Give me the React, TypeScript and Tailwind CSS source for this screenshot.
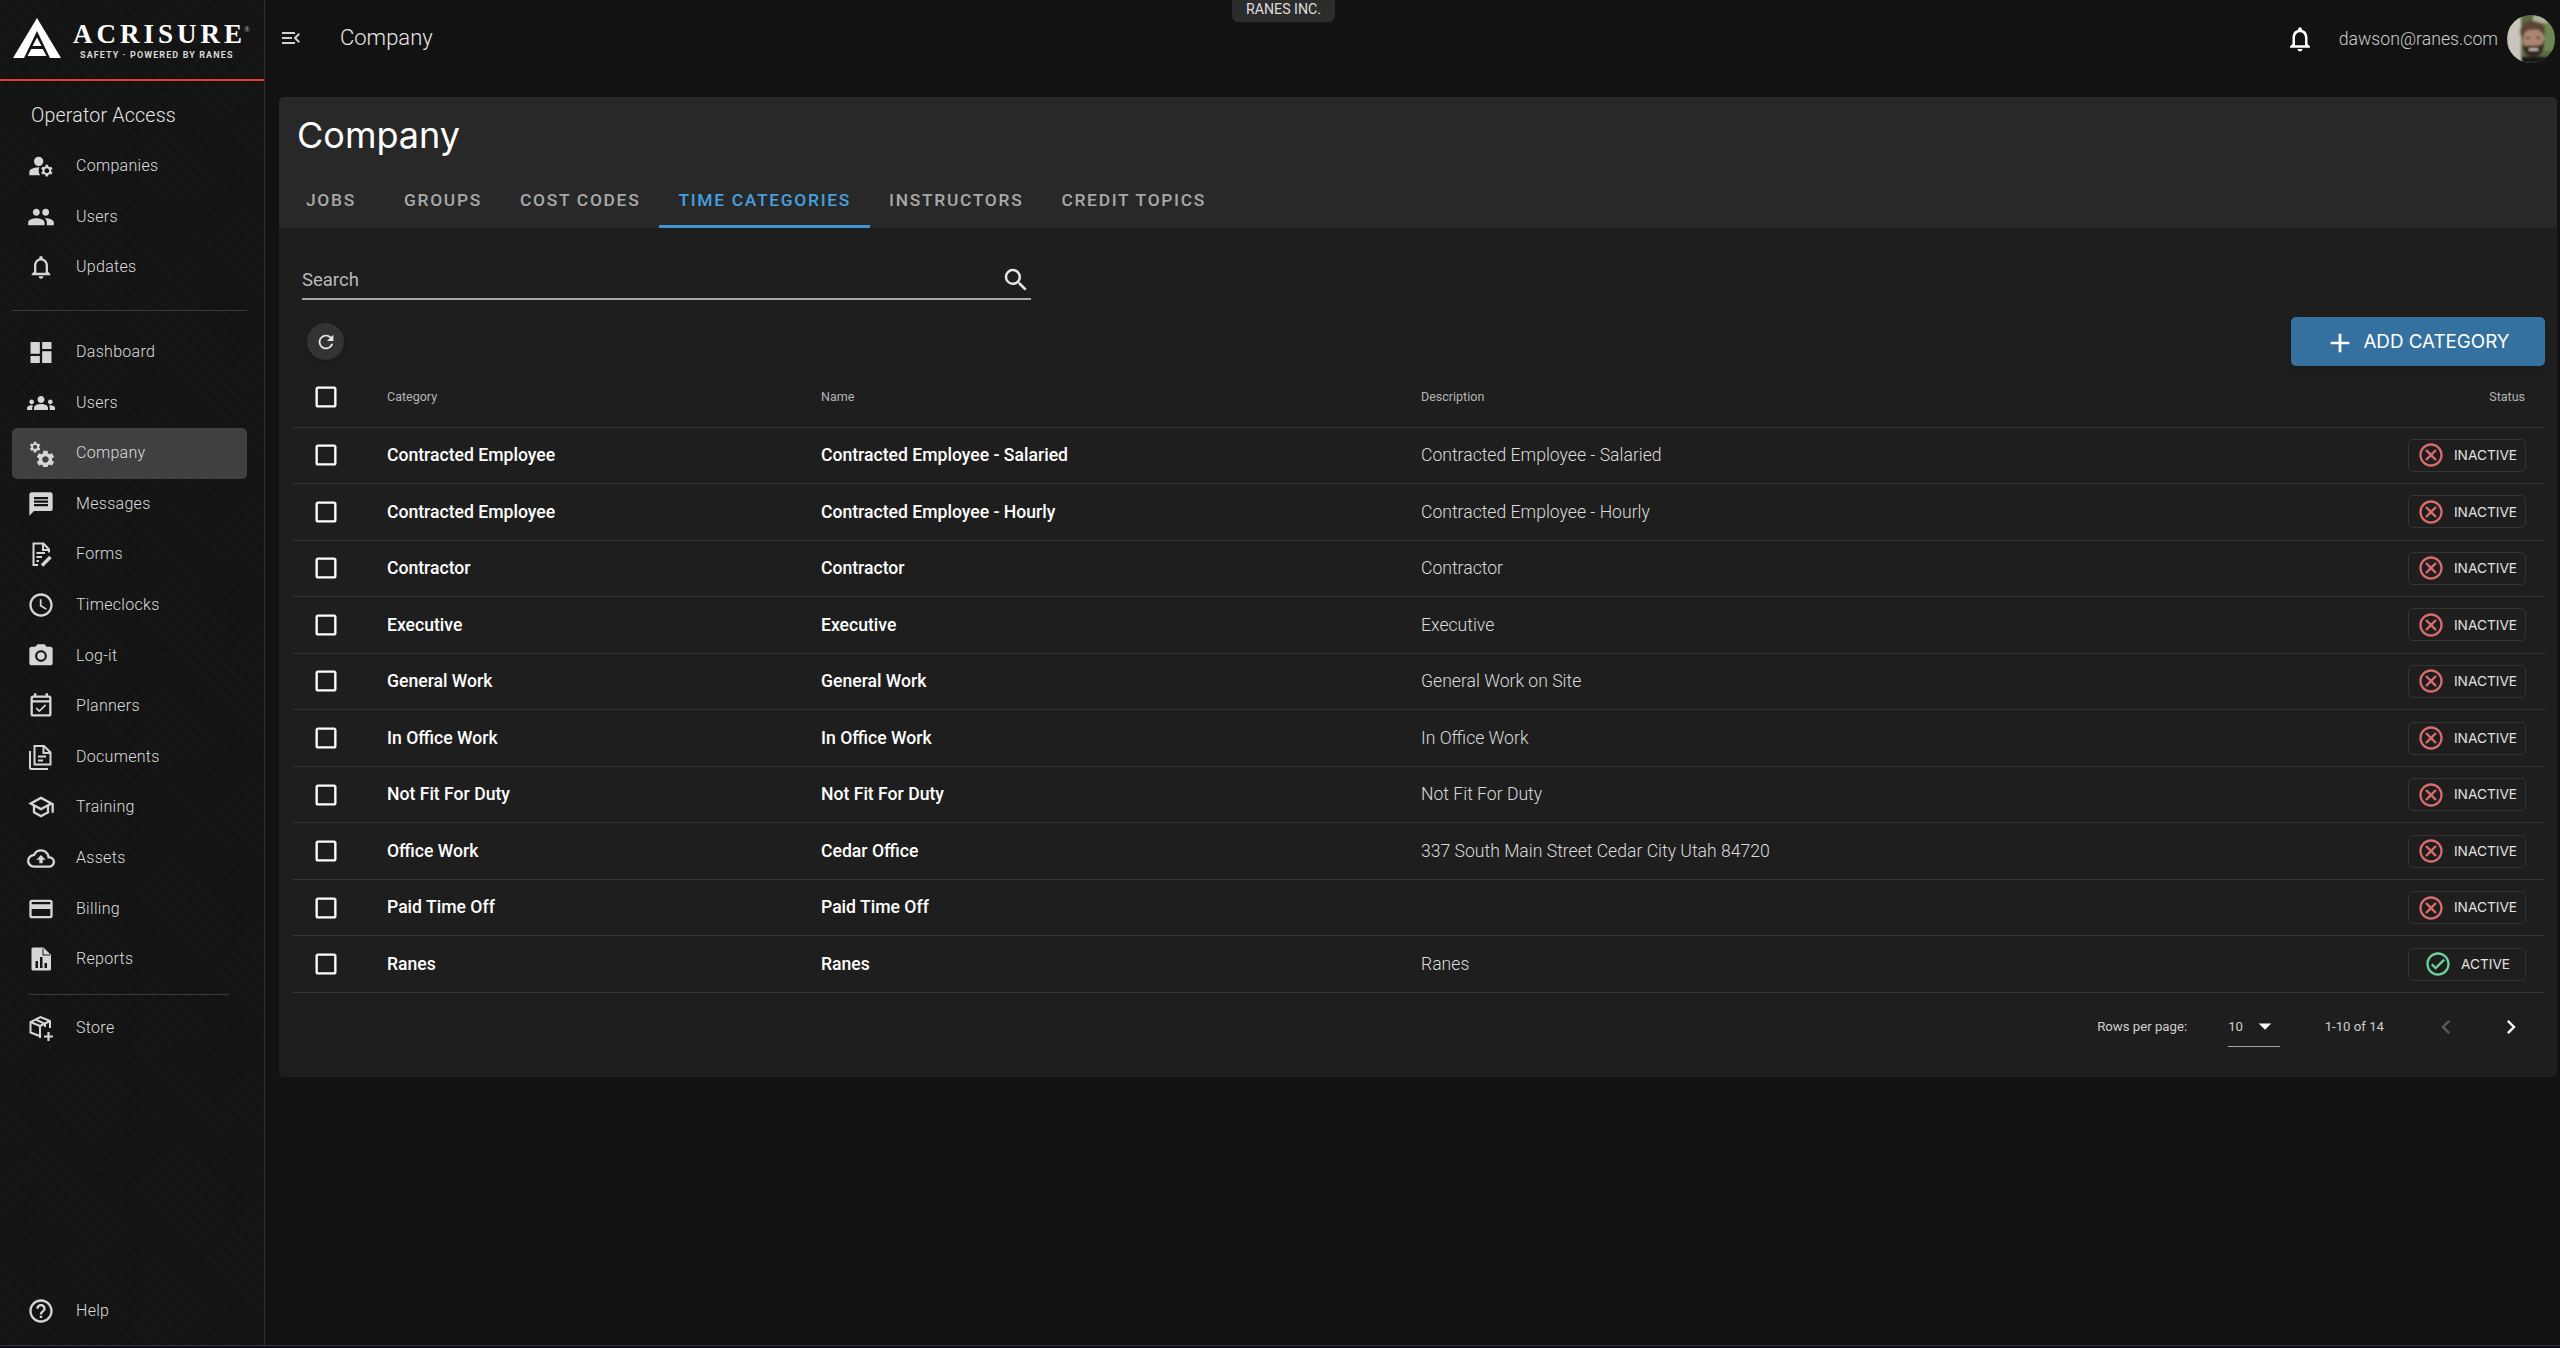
import React from "react";
import {
  MdManageAccounts, MdPeople, MdOutlineNotifications, MdDashboard, MdGroups, MdMessage, MdOutlineAccessTime,
  MdPhotoCamera, MdOutlineEventAvailable, MdOutlineSchool, MdOutlineCloudUpload, MdOutlineCreditCard,
  MdHelpOutline, MdMenuOpen, MdSearch, MdRefresh, MdAdd, MdOutlineCancel, MdOutlineCheckCircle,
  MdArrowDropDown, MdChevronLeft, MdChevronRight, MdCheckBoxOutlineBlank,
} from "react-icons/md";

const gear = "M19.14 12.94c.04-.3.06-.61.06-.94 0-.32-.02-.64-.07-.94l2.03-1.58c.18-.14.23-.41.12-.61l-1.92-3.32c-.12-.22-.37-.29-.59-.22l-2.39.96c-.5-.38-1.03-.7-1.62-.94l-.36-2.54c-.04-.24-.24-.41-.48-.41h-3.84c-.24 0-.43.17-.47.41l-.36 2.54c-.59.24-1.13.57-1.62.94l-2.39-.96c-.22-.08-.47 0-.59.22L2.74 8.87c-.12.21-.08.47.12.61l2.03 1.58c-.05.3-.09.63-.09.94s.02.64.07.94l-2.03 1.58c-.18.14-.23.41-.12.61l1.92 3.32c.12.22.37.29.59.22l2.39-.96c.5.38 1.03.7 1.62.94l.36 2.54c.05.24.24.41.48.41h3.84c.24 0 .44-.17.47-.41l.36-2.54c.59-.24 1.13-.56 1.62-.94l2.39.96c.22.08.47 0 .59-.22l1.92-3.32c.12-.22.07-.47-.12-.61l-2.01-1.58zM12 15.6c-1.98 0-3.6-1.62-3.6-3.6s1.62-3.6 3.6-3.6 3.6 1.62 3.6 3.6-1.62 3.6-3.6 3.6z";

type IconProps = { size?: number; className?: string };

const Gears = ({ size = 28 }: IconProps) => (
  <svg width={size} height={size} viewBox="0 0 28 28" fill="currentColor">
    <g transform="translate(1.5 1.5) scale(0.55)"><path d={gear} /></g>
    <g transform="translate(7.5 9.5) scale(0.91)"><path d={gear} /></g>
  </svg>
);
const FormsIcon = ({ size = 28 }: IconProps) => (
  <svg width={size} height={size} viewBox="0 0 28 28" fill="none" stroke="currentColor" strokeWidth="2">
    <path d="M11 25H6.5V3.5H16.5L22 9.5V12.5" />
    <path d="M16 4V10H22" />
    <path d="M9.5 13H18M9.5 17H15M9.5 21H12" />
    <path d="M15 25.5L23.5 17" strokeWidth="3.4" />
  </svg>
);
const DocsIcon = ({ size = 28 }: IconProps) => (
  <svg width={size} height={size} viewBox="0 0 28 28" fill="none" stroke="currentColor" strokeWidth="2">
    <path d="M3 8V24.5a1.5 1.5 0 0 0 1.5 1.5H21" />
    <path d="M7.5 3H17L23.5 9.5V21.5H7.5Z" />
    <path d="M16.5 3V10H23.5" />
    <path d="M11 13.5H19M11 17.5H16" />
  </svg>
);
const ReportsIcon = ({ size = 28 }: IconProps) => (
  <svg width={size} height={size} viewBox="0 0 28 28">
    <path fill="currentColor" d="M6 2.5H16.5L24 10V24a1.5 1.5 0 0 1-1.5 1.5H6A1.5 1.5 0 0 1 4.500 24V4A1.5 1.500 0 0 1 6 2.500Z" />
    <path fill="#141414" d="M8.500 16H11V23H8.500ZM13 12H15.500V23H13ZM17.500 18H20V23H17.500ZM15.500 3.500V10.500H23V9.500H16.500V3.500Z" />
  </svg>
);
const StoreIcon = ({ size = 28 }: IconProps) => (
  <svg width={size} height={size} viewBox="0 0 28 28" fill="none" stroke="currentColor" strokeWidth="2">
    <path d="M14 22.500L3.500 18.500V8L13.500 3L23 7V14" />
    <path d="M3.500 8L13 12V24M13 12L23 7M8.500 5.500L18 9.800V13" />
    <path d="M21.500 18V27M17 22.500H26" strokeWidth="2.200" />
  </svg>
);

const Avatar = () => (
  <svg width="48" height="48" viewBox="0 0 48 48" className="rounded-full">
    <defs>
      <filter id="soft"><feGaussianBlur stdDeviation="0.8" /></filter>
    </defs>
    <rect width="48" height="48" fill="#5d6b46" />
    <g filter="url(#soft)">
      <rect x="0" y="0" width="14" height="48" fill="#c9c5bb" />
      <rect x="36" y="0" width="12" height="36" fill="#6f8652" />
      <rect x="26" y="0" width="14" height="8" fill="#a9b49c" />
      <ellipse cx="26" cy="24" rx="11" ry="15" fill="#a98671" />
      <path d="M13 19C11 7 24 3 34 8C39 11 39 17 37 21C34 14 28 14 24 15C19 15 17 17 16 25Z" fill="#5b4534" />
      <path d="M16 28C18 33 21 30 26 31C32 30 35 32 37 25C38 35 34 42 26 42C20 42 16 36 16 28Z" fill="#34261e" />
      <path d="M19 23H23M29 23H33" stroke="#3a2a20" strokeWidth="1.600" />
      <path d="M22 34.500H31" stroke="#e9e0d6" strokeWidth="2" />
      <rect x="14" y="42" width="26" height="6" fill="#191716" />
    </g>
  </svg>
);

const Logo = () => (
  <div className="flex h-[79px] items-start pl-[13px] pt-[18px]">
    <svg width="48" height="40" viewBox="0 0 48 40" className="shrink-0">
      <polygon points="24,0 0,40 48,40" fill="#ffffff" />
      <polygon points="24,13 11,40 37,40" fill="#141414" />
      <polygon points="24,19.500 19.500,28 28.500,28" fill="#ffffff" />
      <polygon points="18.300,31 29.700,31 33.500,38 14.500,38" fill="#ffffff" />
    </svg>
    <div className="ml-[12px] flex flex-col">
      <div className="relative mt-[2px] h-[28px] font-['Liberation_Serif',serif] text-[27px] leading-[28px] font-bold tracking-[4px] whitespace-nowrap text-white">
        ACRISURE
        <span className="absolute top-[6px] left-[171px] text-[8px] leading-[8px] font-normal tracking-normal text-[#bbbbbb]">®</span>
      </div>
      <div className="mt-[2px] ml-[7px] font-['Roboto',sans-serif] text-[9px] leading-[10px] font-bold tracking-[1.1px] whitespace-nowrap text-[#d8d8d8]">
        SAFETY · POWERED BY RANES
      </div>
    </div>
  </div>
);

type NavProps = { icon: React.ReactNode; label: string; active?: boolean };
const NavItem = ({ icon, label, active }: NavProps) => (
  <div className={`ml-[12px] flex h-[50.6px] w-[235px] items-center rounded-[5px] pl-[15px] ${active ? "bg-[#404040]" : ""}`}>
    <span className="flex w-[28px] shrink-0 justify-center text-[#d6d6d6]">{icon}</span>
    <span className="ml-[21px] text-[16px] font-light tracking-[0.3px] text-[#dddddd]">{label}</span>
  </div>
);

const Sidebar = () => (
  <aside className="flex w-[265px] shrink-0 flex-col border-r border-[#2e2e2e] bg-[#141414] [background-image:repeating-linear-gradient(45deg,rgba(255,255,255,0.022)_0px,rgba(255,255,255,0.022)_1px,transparent_1px,transparent_3px),repeating-linear-gradient(-45deg,rgba(0,0,0,0.2)_0px,rgba(0,0,0,0.2)_1px,transparent_1px,transparent_3px)]">
    <Logo />
    <div className="h-[2px] bg-[#e8392f]" />
    <div className="flex h-[60px] items-center pt-[9px] pl-[31px] text-[19.6px] font-light tracking-[0.2px] text-[#e4e4e4]">Operator Access</div>
    <NavItem icon={<MdManageAccounts size={30} />} label="Companies" />
    <NavItem icon={<MdPeople size={28} />} label="Users" />
    <NavItem icon={<MdOutlineNotifications size={30} />} label="Updates" />
    <div className="mt-[17px] ml-[12px] h-px w-[235px] bg-[#3a3a3a]" />
    <div className="mt-[16px] flex flex-col">
      <NavItem icon={<MdDashboard size={29} />} label="Dashboard" />
      <NavItem icon={<MdGroups size={32} />} label="Users" />
      <NavItem icon={<Gears />} label="Company" active />
      <NavItem icon={<MdMessage size={28} />} label="Messages" />
      <NavItem icon={<FormsIcon />} label="Forms" />
      <NavItem icon={<MdOutlineAccessTime size={28} />} label="Timeclocks" />
      <NavItem icon={<MdPhotoCamera size={28} />} label="Log-it" />
      <NavItem icon={<MdOutlineEventAvailable size={28} />} label="Planners" />
      <NavItem icon={<DocsIcon />} label="Documents" />
      <NavItem icon={<MdOutlineSchool size={30} />} label="Training" />
      <NavItem icon={<MdOutlineCloudUpload size={31} />} label="Assets" />
      <NavItem icon={<MdOutlineCreditCard size={28} />} label="Billing" />
      <NavItem icon={<ReportsIcon />} label="Reports" />
    </div>
    <div className="mt-[9px] ml-[29px] h-px w-[200px] bg-[#3a3a3a]" />
    <div className="mt-[8px]">
      <NavItem icon={<StoreIcon />} label="Store" />
    </div>
    <div className="mt-auto mb-[9px]">
      <NavItem icon={<MdHelpOutline size={28} />} label="Help" />
    </div>
  </aside>
);

const TopBar = () => (
  <header className="relative flex h-[78px] items-center pr-[5px] pl-[14px]">
    <MdMenuOpen size={24} className="mb-[2px] text-[#d0d0d0]" />
    <span className="mb-[3px] ml-[37px] text-[22px] font-light text-[#e6e6e6]">Company</span>
    <div className="absolute top-0 left-[967px] flex h-[22px] w-[103px] items-center justify-center rounded-b-[6px] bg-[#2c2c2c] pb-[3px] text-[14.2px] text-[#dddddd]">RANES INC.</div>
    <MdOutlineNotifications size={30} className="ml-auto text-white" />
    <span className="ml-[24px] text-[17.7px] font-light text-[#cccccc]">dawson@ranes.com</span>
    <span className="ml-[9px]"><Avatar /></span>
  </header>
);

const tabs = ["JOBS", "GROUPS", "COST CODES", "TIME CATEGORIES", "INSTRUCTORS", "CREDIT TOPICS"];

const Checkbox = () => <MdCheckBoxOutlineBlank size={28} className="text-white" />;

const Status = ({ active }: { active?: boolean }) => (
  <div className="flex h-[33px] w-[118px] items-center justify-center gap-[9px] rounded-[5px] border border-[#343434] font-['Inter',sans-serif] text-[13.7px] text-[#e2e2e2]">
    {active ? <MdOutlineCheckCircle size={28} className="text-[#69d49b]" /> : <MdOutlineCancel size={28} className="text-[#d96c6c]" />}
    <span>{active ? "ACTIVE" : "INACTIVE"}</span>
  </div>
);

const rows: [string, string, string, boolean?][] = [
  ["Contracted Employee", "Contracted Employee - Salaried", "Contracted Employee - Salaried"],
  ["Contracted Employee", "Contracted Employee - Hourly", "Contracted Employee - Hourly"],
  ["Contractor", "Contractor", "Contractor"],
  ["Executive", "Executive", "Executive"],
  ["General Work", "General Work", "General Work on Site"],
  ["In Office Work", "In Office Work", "In Office Work"],
  ["Not Fit For Duty", "Not Fit For Duty", "Not Fit For Duty"],
  ["Office Work", "Cedar Office", "337 South Main Street Cedar City Utah 84720"],
  ["Paid Time Off", "Paid Time Off", ""],
  ["Ranes", "Ranes", "Ranes", true],
];

const Card = () => (
  <section className="mr-[3px] ml-[14px] mt-[19px] h-[979.5px] overflow-hidden rounded-[5px] bg-[#1e1e1e]">
    <div className="h-[131px] bg-[#282828]">
      <div className="flex h-[75px] items-center pl-[18px] font-['Inter',sans-serif] text-[36px] font-normal text-white">Company</div>
      <div className="flex h-[56px] pl-[8px]">
        {tabs.map((t) => {
          const on = t === "TIME CATEGORIES";
          return (
            <div key={t} className={`flex items-center border-b-[3px] px-[19px] pt-[3px] text-[17.4px] font-medium tracking-[1.7px] first:pr-[29px] ${on ? "border-[#3f97d4] text-[#45a0de]" : "border-transparent text-[#a8a8a8]"}`}>
              {t}
            </div>
          );
        })}
      </div>
    </div>
    <div className="pt-[32px] pr-[12px] pl-[14px]">
      <div className="ml-[9px] flex h-[40px] w-[729px] items-center justify-between border-b-2 border-[#a8a8a8] pt-[3px]">
        <span className="text-[18.5px] text-[#b8b8b8]">Search</span>
        <MdSearch size={30} className="mb-[1px] text-[#e8e8e8]" />
      </div>
      <div className="mt-[17px] flex h-[49px] items-center justify-between">
        <div className="ml-[14px] flex size-[37px] items-center justify-center rounded-full bg-[#333333] shadow-md">
          <MdRefresh size={22} className="text-[#e6e6e6]" />
        </div>
        <div className="flex h-[49px] w-[254px] items-center justify-center gap-[7px] rounded-[5px] bg-[#35719f] pt-[2px] pr-[2px] font-['Inter',sans-serif] text-[18.8px] font-normal text-white shadow-md">
          <MdAdd size={32} />
          <span>ADD CATEGORY</span>
        </div>
      </div>
      <div className="flex h-[61.5px] items-center border-b border-[#343434] pt-[1.5px] text-[12.5px] text-[#b4b4b4]">
        <div className="w-[94px] pl-[19px]"><Checkbox /></div>
        <div className="w-[434px]">Category</div>
        <div className="w-[600px]">Name</div>
        <div className="flex-1">Description</div>
        <div className="pr-[20px]">Status</div>
      </div>
      {rows.map(([cat, name, desc, active], i) => (
        <div key={i} className="flex h-[56.55px] items-center border-b border-[#343434] text-[17.6px]">
          <div className="flex w-[94px] pl-[19px]"><Checkbox /></div>
          <div className="w-[434px] font-medium text-white">{cat}</div>
          <div className="w-[600px] font-medium text-white">{name}</div>
          <div className="flex-1 font-light text-[#dcdcdc]">{desc}</div>
          <div className="pr-[19px]"><Status active={active} /></div>
        </div>
      ))}
      <div className="flex h-[68px] items-center justify-end pr-[20px] text-[13.2px] text-[#d0d0d0]">
        <span>Rows per page:</span>
        <div className="ml-[41px] flex h-[40px] w-[52px] items-center justify-between border-b border-[#a8a8a8]">
          <span>10</span>
          <MdArrowDropDown size={30} className="text-white" />
        </div>
        <span className="ml-[44.5px]">1-10 of 14</span>
        <MdChevronLeft size={28} className="ml-[48px] text-[#5c5c5c]" />
        <MdChevronRight size={28} className="ml-[37px] text-white" />
      </div>
    </div>
  </section>
);

export default function App() {
  return (
    <div className="flex h-[1348px] w-full flex-col overflow-hidden bg-[#121212] font-['Roboto',sans-serif]">
      <div className="flex h-[1345px]">
        <Sidebar />
        <main className="min-w-0 flex-1">
          <TopBar />
          <Card />
        </main>
      </div>
      <div className="h-px bg-[#333333]" />
      <div className="h-[2px] bg-[#100c24]" />
    </div>
  );
}
